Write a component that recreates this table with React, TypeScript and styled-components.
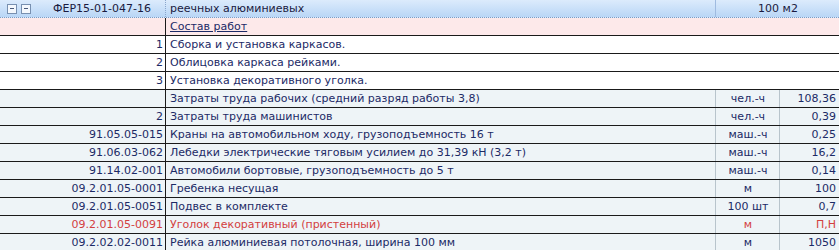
import React from "react";
import styled, { createGlobalStyle } from "styled-components";

const GlobalStyle = createGlobalStyle`
  html, body {
    margin: 0;
    padding: 0;
    background: #ffffff;
  }
  body {
    font-family: "DejaVu Sans", Tahoma, sans-serif;
    font-size: 11px;
  }
`;

type Tone = "header" | "section" | "plain" | "resource";

const Sheet = styled.div`
  width: 839px;
  height: 250px;
  overflow: hidden;
  display: flex;
  flex-direction: column;
`;

const Row = styled.div<{ $tone: Tone }>`
  display: grid;
  grid-template-columns: 166px 550px 64px 59px;
  height: 18px;
  flex: none;
  box-sizing: border-box;
  color: #1c2a66;
  background: ${p =>
    p.$tone === "header"
      ? "linear-gradient(#dcebfc, #b9d6f6)"
      : p.$tone === "section"
      ? "#fde9ea"
      : p.$tone === "resource"
      ? "#eef4f7"
      : "#ffffff"};
  border-bottom: 1px ${p => (p.$tone === "header" ? "dotted #7d9cc4" : "solid #1a1a1a")};
`;

const Cell = styled.div<{ $align?: "left" | "right" | "center"; $red?: boolean; $line?: string }>`
  display: flex;
  align-items: center;
  justify-content: ${p =>
    p.$align === "right" ? "flex-end" : p.$align === "center" ? "center" : "flex-start"};
  padding: 0 3px 0 4px;
  white-space: nowrap;
  overflow: hidden;
  line-height: 17px;
  color: ${p => (p.$red ? "#d3403f" : "inherit")};
  border-right: ${p => p.$line ?? "none"};
  box-sizing: border-box;
`;

const CodeCell = styled(Cell)`
  padding: 0 2px 0 0;
`;

const HeadCode = styled.div`
  display: flex;
  align-items: center;
  gap: 4px;
  padding-left: 7px;
  border-right: 1px dotted #8aa6cc;
`;

const HeadCodeText = styled.span`
  margin-left: 18px;
  color: #1a1a40;
`;

const Toggle = styled.span`
  width: 8px;
  height: 8px;
  border: 1px solid #7890b0;
  background: #f4f8fd;
  position: relative;
  &::after {
    content: "";
    position: absolute;
    left: 2px;
    right: 2px;
    top: 3.5px;
    height: 1px;
    background: #4a5a7a;
  }
`;

const HeadName = styled(Cell)`
  color: #1a1a40;
  border-right: 1px solid #9fbbe0;
`;

const HeadUnit = styled(Cell)`
  grid-column: span 2;
  color: #1a1a40;
`;

const Underlined = styled.span`
  text-decoration: underline;
`;

type Line = {
  code: string;
  name: string;
  unit?: string;
  value?: string;
  tone: Tone;
  red?: boolean;
  underline?: boolean;
};

const lines: Line[] = [
  { code: "", name: "Состав работ", tone: "section", underline: true },
  { code: "1", name: "Сборка и установка каркасов.", tone: "plain" },
  { code: "2", name: "Облицовка каркаса рейками.", tone: "plain" },
  { code: "3", name: "Установка декоративного уголка.", tone: "plain" },
  { code: "", name: "Затраты труда рабочих (средний разряд работы 3,8)", unit: "чел.-ч", value: "108,36", tone: "resource" },
  { code: "2", name: "Затраты труда машинистов", unit: "чел.-ч", value: "0,39", tone: "resource" },
  { code: "91.05.05-015", name: "Краны на автомобильном ходу, грузоподъемность 16 т", unit: "маш.-ч", value: "0,25", tone: "resource" },
  { code: "91.06.03-062", name: "Лебедки электрические тяговым усилием до 31,39 кН (3,2 т)", unit: "маш.-ч", value: "16,2", tone: "resource" },
  { code: "91.14.02-001", name: "Автомобили бортовые, грузоподъемность до 5 т", unit: "маш.-ч", value: "0,14", tone: "resource" },
  { code: "09.2.01.05-0001", name: "Гребенка несущая", unit: "м", value: "100", tone: "resource" },
  { code: "09.2.01.05-0051", name: "Подвес в комплекте", unit: "100 шт", value: "0,7", tone: "resource" },
  { code: "09.2.01.05-0091", name: "Уголок декоративный (пристенный)", unit: "м", value: "П,Н", tone: "resource", red: true },
  { code: "09.2.02.02-0011", name: "Рейка алюминиевая потолочная, ширина 100 мм", unit: "м", value: "1050", tone: "resource" },
];

const App = () => (
  <>
    <GlobalStyle />
    <Sheet>
      <Row $tone="header">
        <HeadCode>
          <Toggle />
          <Toggle />
          <HeadCodeText>ФЕР15-01-047-16</HeadCodeText>
        </HeadCode>
        <HeadName>реечных алюминиевых</HeadName>
        <HeadUnit $align="center">100 м2</HeadUnit>
      </Row>
      {lines.map((l, i) => (
        <Row key={i} $tone={l.tone}>
          <CodeCell $align="right" $red={l.red} $line="1px solid #1a1a1a">
            {l.code}
          </CodeCell>
          <Cell $red={l.red} $line={l.tone === "resource" ? "1px solid #b8c4cc" : "none"}>
            {l.underline ? <Underlined>{l.name}</Underlined> : l.name}
          </Cell>
          <Cell $align="center" $red={l.red} $line={l.tone === "resource" ? "1px solid #b8c4cc" : "none"}>
            {l.unit}
          </Cell>
          <Cell $align="right" $red={l.red}>
            {l.value}
          </Cell>
        </Row>
      ))}
    </Sheet>
  </>
);

export default App;
